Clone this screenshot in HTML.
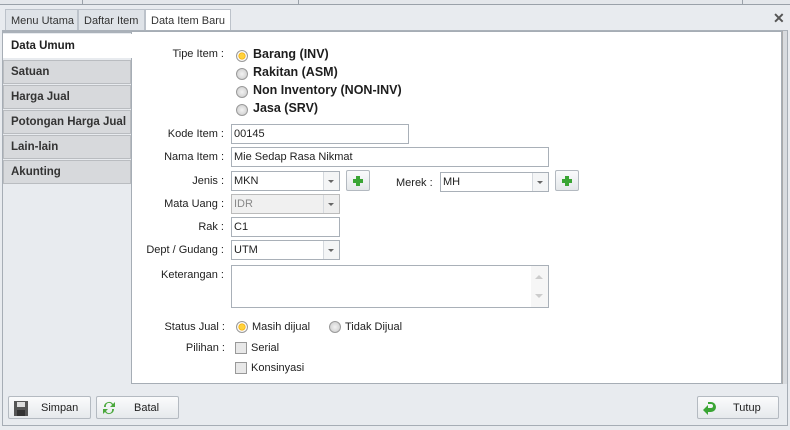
<!DOCTYPE html>
<html><head><style>
*{box-sizing:border-box;margin:0;padding:0}
body{width:790px;height:430px;background:#e8ebef;font-family:"Liberation Sans",sans-serif;font-size:11px;color:#1e1e1e;position:relative;overflow:hidden}
.a{position:absolute}
.tab{position:absolute;top:9px;height:21px;border:1px solid #bcc2ca;border-bottom:none;background:#dfe3e8;padding:5px 0 0 5px;color:#333}
.nav{position:absolute;left:3px;width:128px;height:24px;background:#d7d9dc;border:1px solid #b9bcc0;font-weight:bold;font-size:11.5px;padding:5px 0 0 7px;color:#333}
.lbl{position:absolute;right:566px;text-align:right;white-space:nowrap}
.inp{position:absolute;height:20px;background:#fff;border:1px solid #a9b0b8;padding:3px 0 0 2px}
.dd{position:absolute;right:0;top:0;width:16px;height:18px;border-left:1px solid #d5d9de;background:#f4f5f6}
.dd:after{content:"";position:absolute;left:4px;top:8px;border:3px solid transparent;border-top:3px solid #666}
.plus{position:absolute;width:24px;height:21px;border:1px solid #b3b9c0;border-radius:2px;background:linear-gradient(#fafbfc,#e4e7ea)}
.plus:before{content:"";position:absolute;left:9px;top:5px;width:4px;height:10px;background:#3aa534}
.plus:after{content:"";position:absolute;left:6px;top:8px;width:10px;height:4px;background:#3aa534}
.rad{position:absolute;width:12px;height:12px;border-radius:50%;border:1px solid #9a9a9a;background:radial-gradient(#f2f2f2,#c9c9c9)}
.rad.on{background:radial-gradient(#ffd23c 35%,#f0a800 45%,#fff 55%,#ddd)}
.rl{position:absolute;font-weight:bold;font-size:12.5px}
.chk{position:absolute;width:12px;height:12px;border:1px solid #999;background:#e8e8e8}
.btn{position:absolute;top:396px;height:23px;border:1px solid #b4bac1;border-radius:2px;background:linear-gradient(#fbfbfc,#e6e9ec)}
.btn span{position:absolute;top:5px}
</style></head><body>
<div class="a" style="left:0;top:0;width:790px;height:5px;background:#e4e7eb;border-bottom:1px solid #9aa1a9"></div>
<div class="a" style="left:82px;top:0;width:1px;height:5px;background:#9aa1a9"></div>
<div class="a" style="left:298px;top:0;width:1px;height:5px;background:#9aa1a9"></div>
<div class="a" style="left:742px;top:0;width:1px;height:5px;background:#9aa1a9"></div>
<div class="tab" style="left:5px;width:73px">Menu Utama</div>
<div class="tab" style="left:78px;width:67px">Daftar Item</div>
<div class="tab" style="left:145px;width:86px;background:#fff;top:9px;height:22px">Data Item Baru</div>
<div class="a" style="left:773px;top:10px;font-size:14px;font-weight:bold;color:#555">✕</div>
<div class="a" style="left:2px;top:30px;width:786px;height:396px;border:1px solid #a6adb5;border-top:3px solid #aab1b9;background:#e8ebef"></div>
<div class="a" style="left:131px;top:31px;width:651px;height:353px;background:#fff;border:1px solid #a6adb5"></div>
<div class="a" style="left:782px;top:31px;width:5px;height:353px;background:#d8dbdf;border-left:1px solid #aaa"></div>
<div class="nav" style="top:34px;background:#fff;border-color:#fff;border-right:none;width:129px;color:#222">Data Umum</div>
<div class="nav" style="top:60px">Satuan</div>
<div class="nav" style="top:85px">Harga Jual</div>
<div class="nav" style="top:110px">Potongan Harga Jual</div>
<div class="nav" style="top:135px">Lain-lain</div>
<div class="nav" style="top:160px">Akunting</div>

<div class="lbl" style="top:48px">Tipe Item :</div>
<div class="rad on" style="left:236px;top:50px"></div><div class="rl" style="left:253px;top:47px">Barang (INV)</div>
<div class="rad" style="left:236px;top:68px"></div><div class="rl" style="left:253px;top:65px">Rakitan (ASM)</div>
<div class="rad" style="left:236px;top:86px"></div><div class="rl" style="left:253px;top:83px">Non Inventory (NON-INV)</div>
<div class="rad" style="left:236px;top:104px"></div><div class="rl" style="left:253px;top:101px">Jasa (SRV)</div>

<div class="lbl" style="top:128px">Kode Item :</div>
<div class="inp" style="left:231px;top:124px;width:178px">00145</div>
<div class="lbl" style="top:151px">Nama Item :</div>
<div class="inp" style="left:231px;top:147px;width:318px">Mie Sedap Rasa Nikmat</div>
<div class="lbl" style="top:175px">Jenis :</div>
<div class="inp" style="left:231px;top:171px;width:109px">MKN<div class="dd"></div></div>
<div class="plus" style="left:346px;top:170px"></div>
<div class="a" style="left:396px;top:177px">Merek :</div>
<div class="inp" style="left:440px;top:172px;width:109px">MH<div class="dd"></div></div>
<div class="plus" style="left:555px;top:170px"></div>
<div class="lbl" style="top:198px">Mata Uang :</div>
<div class="inp" style="left:231px;top:194px;width:109px;background:#f0f0f0;border-color:#bbb;color:#888">IDR<div class="dd" style="background:#eee"></div></div>
<div class="lbl" style="top:221px">Rak :</div>
<div class="inp" style="left:231px;top:217px;width:109px">C1</div>
<div class="lbl" style="top:244px">Dept / Gudang :</div>
<div class="inp" style="left:231px;top:240px;width:109px">UTM<div class="dd"></div></div>
<div class="lbl" style="top:269px">Keterangan :</div>
<div class="inp" style="left:231px;top:265px;width:318px;height:43px"><div class="a" style="right:0;top:0;width:17px;height:41px;background:#f6f6f6"><div class="a" style="left:4px;top:5px;border:4px solid transparent;border-bottom:4px solid #ccc"></div><div class="a" style="left:4px;top:28px;border:4px solid transparent;border-top:4px solid #ccc"></div></div></div>
<div class="lbl" style="top:321px;right:565px">Status Jual :</div>
<div class="rad on" style="left:236px;top:321px"></div><div class="a" style="left:252px;top:321px">Masih dijual</div>
<div class="rad" style="left:329px;top:321px"></div><div class="a" style="left:345px;top:321px">Tidak Dijual</div>
<div class="lbl" style="top:342px;right:565px">Pilihan :</div>
<div class="chk" style="left:235px;top:342px"></div><div class="a" style="left:251px;top:342px">Serial</div>
<div class="chk" style="left:235px;top:362px"></div><div class="a" style="left:251px;top:362px">Konsinyasi</div>

<div class="btn" style="left:8px;width:83px"><svg class="a" style="left:5px;top:4px" width="14" height="15"><rect x="0" y="0" width="14" height="15" fill="#555"/><rect x="3" y="1" width="8" height="5" fill="#ddd"/><rect x="3" y="9" width="8" height="6" fill="#333"/></svg><span style="left:32px">Simpan</span></div>
<div class="btn" style="left:96px;width:83px"><svg class="a" style="left:4px;top:3px" width="16" height="16"><path d="M3 7a5 5 0 0 1 9-3l2-2v5h-5l2-2a3 3 0 0 0-6 2z M13 9a5 5 0 0 1-9 3l-2 2v-5h5l-2 2a3 3 0 0 0 6-2z" fill="#4aa83c"/></svg><span style="left:37px">Batal</span></div>
<div class="btn" style="left:697px;width:82px"><svg class="a" style="left:4px;top:3px" width="16" height="16"><path d="M6 2h3a5 5 0 0 1 0 10H6v3l-5-5 5-5v3h3a2 2 0 0 0 0-4H6z" fill="#3aa534"/></svg><span style="left:35px">Tutup</span></div>
</body></html>
